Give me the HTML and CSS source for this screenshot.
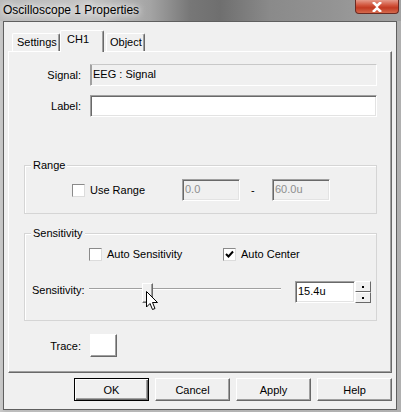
FILE: index.html
```html
<!DOCTYPE html>
<html lang="en">
<head>
  <meta charset="UTF-8">
  <meta name="viewport" content="width=device-width, initial-scale=1.0">
  <title>Oscilloscope 1 Properties</title>
  <link rel="stylesheet" href="styles.css">
</head>
<body>
  <div class="window">
    <div class="titlebar">
      <span class="title">Oscilloscope 1 Properties</span>
      <div class="close-btn">
        <svg width="14" height="10" viewBox="0 0 14 10">
          <path d="M3 0 L7 4 L11 0 M3 10 L7 6 L11 10" stroke="#fff" stroke-width="2.6" fill="none"/>
        </svg>
      </div>
    </div>

    <div class="client">
      <!-- tab strip -->
      <div class="tabs">
        <div class="tab tab-settings">Settings</div>
        <div class="tab tab-active">CH1</div>
        <div class="tab tab-object">Object</div>
      </div>

      <div class="panel">
        <div class="field-row first">
          <span class="row-label">Signal:</span>
          <div class="textbox readonly">EEG : Signal</div>
        </div>
        <div class="field-row">
          <span class="row-label">Label:</span>
          <div class="textbox"></div>
        </div>

        <!-- Range group -->
        <div class="group group-range">
          <span class="caption">Range</span>
          <div class="range-row">
            <label class="check check-range"><span class="box"></span>Use Range</label>
            <div class="textbox small disabled">0.0</div>
            <span class="dash">-</span>
            <div class="textbox small disabled">60.0u</div>
          </div>
        </div>

        <!-- Sensitivity group -->
        <div class="group group-sens">
          <span class="caption">Sensitivity</span>
          <div class="check-row">
            <label class="check check-auto-sens"><span class="box"></span>Auto Sensitivity</label>
            <label class="check"><span class="box checked">
              <svg width="11" height="11" viewBox="0 0 11 11">
                <path d="M2 5 L4.5 7.5 L9 2.5" stroke="#000" stroke-width="2" fill="none"/>
              </svg>
            </span>Auto Center</label>
          </div>
          <div class="slider-row">
            <span class="slider-label">Sensitivity:</span>
            <div class="slider">
              <div class="track"></div>
              <div class="thumb"></div>
              <svg class="cursor" width="13" height="20" viewBox="0 0 13 20">
                <path d="M0.5 0.5 L0.5 16 L4 12.5 L6.5 18.5 L9 17.5 L6.5 11.5 L11.5 11.5 Z" fill="#fff" stroke="#000" stroke-width="1"/>
              </svg>
            </div>
            <div class="textbox num">15.4u</div>
            <div class="spin">
              <div class="spin-btn"><span class="dot"></span></div>
              <div class="spin-btn"><span class="dot"></span></div>
            </div>
          </div>
        </div>

        <div class="field-row trace-row">
          <span class="row-label">Trace:</span>
          <div class="color-btn"></div>
        </div>
      </div>

      <div class="buttons">
        <button class="btn default">OK</button>
        <button class="btn">Cancel</button>
        <button class="btn">Apply</button>
        <button class="btn">Help</button>
      </div>
    </div>
  </div>
</body>
</html>
```

FILE: styles.css
```css
body {
  margin: 0;
  font-family: "Liberation Sans", Arial, sans-serif;
  font-size: 11px;
  color: #000;
  background: #a8a8a8;
}

.window {
  width: 401px;
  height: 412px;
  display: flex;
  flex-direction: column;
  background: linear-gradient(90deg, #c9c9c9 0, #bdbdbd 6px, #b4b4b4 50%, #b0b0b0 100%);
  overflow: hidden;
}

.titlebar {
  height: 21px;
  flex: none;
  display: flex;
  justify-content: space-between;
  background: linear-gradient(90deg, #bababa 0, #c4c4c4 90px, #a4a4a4 150px, #777 190px, #6f6f6f 220px, #8a8a8a 270px, #939393 330px, #a2a2a2 401px);
}

.title {
  font-size: 12px;
  padding: 3px 0 0 3px;
  color: #000;
  text-shadow: 0 0 6px #fff, 0 0 10px #fff;
}

.close-btn {
  width: 42px;
  height: 13px;
  margin-right: 2px;
  border: 1px solid #6b2a22;
  border-top: none;
  border-radius: 0 0 4px 4px;
  background: linear-gradient(#e59a8a 0, #d2553d 40%, #c23a22 60%, #d46a4d 100%);
  display: flex;
  justify-content: center;
  align-items: center;
}

.client {
  flex: none;
  height: 387px;
  margin: 0 4px 0 3px;
  border: 1px solid #5f5f5f;
  background: #f0f0f0;
  display: flex;
  flex-direction: column;
}

/* tabs */
.tabs {
  display: flex;
  align-items: flex-end;
  height: 21px;
  margin-top: 8px;
  padding-left: 8px;
}

.tab {
  height: 17px;
  line-height: 17px;
  border: 1px solid #fff;
  border-right: 1px solid #696969;
  border-bottom: none;
  border-radius: 2px 2px 0 0;
  background: #f0f0f0;
  box-shadow: inset -1px 0 0 #a0a0a0;
}

.tab-settings {
  width: 42px;
  padding-left: 4px;
}

.tab-active {
  position: relative;
  z-index: 1;
  height: 21px;
  line-height: 16px;
  margin-bottom: -1px;
  width: 36px;
  padding-left: 6px;
}

.tab-object {
  width: 34px;
  padding-left: 3px;
  margin-left: 2px;
}

.panel {
  position: relative;
  height: 320px;
  margin: 0 4px 0 4px;
  border-left: 1px solid #fff;
  border-top: 1px solid #fff;
  border-right: 1px solid #696969;
  border-bottom: 1px solid #696969;
  box-shadow: inset -1px -1px 0 #a0a0a0;
}

.field-row {
  display: flex;
  align-items: center;
  margin-top: 9px;
}

.field-row.first {
  margin-top: 12px;
}

.row-label {
  width: 72px;
  text-align: right;
  margin-right: 9px;
}

.textbox {
  box-sizing: border-box;
  width: 287px;
  height: 22px;
  line-height: 18px;
  padding-left: 2px;
  background: #fff;
  border-top: 1px solid #a0a0a0;
  border-left: 1px solid #a0a0a0;
  border-right: 1px solid #fff;
  border-bottom: 1px solid #fff;
  box-shadow: inset 1px 1px 0 #696969, inset -1px -1px 0 #e3e3e3;
}

.textbox.readonly {
  background: #f0f0f0;
  border-top-color: #c8c8c8;
  box-shadow: inset 1px 0 0 #a0a0a0;
}

.textbox.disabled {
  background: #f0f0f0;
  color: #8e8e8e;
}

.textbox.small {
  width: 58px;
}

/* group boxes */
.group {
  width: 351px;
  margin-left: 15px;
  border: 1px solid #d5d5d5;
  box-shadow: inset 1px 1px 0 #fff;
}

.caption {
  display: block;
  width: fit-content;
  margin: -7px 0 0 6px;
  padding: 0 2px;
  line-height: 13px;
  background: #f0f0f0;
}

.group-range {
  margin-top: 48px;
}

.range-row {
  display: flex;
  align-items: center;
  margin: 7px 0 12px;
}

.check {
  display: flex;
  align-items: center;
}

.box {
  box-sizing: border-box;
  width: 13px;
  height: 13px;
  margin-right: 5px;
  background: #fff;
  border-top: 1px solid #8a8a8a;
  border-left: 1px solid #8a8a8a;
  border-right: 1px solid #dcdcdc;
  border-bottom: 1px solid #dcdcdc;
  display: flex;
  justify-content: center;
  align-items: center;
}

.check-range {
  width: 110px;
  margin-left: 47px;
  line-height: 13px;
}

.dash {
  width: 21px;
  padding-left: 11px;
}

.group-sens {
  margin-top: 19px;
}

.check-row {
  display: flex;
  margin-top: 8px;
  line-height: 13px;
}

.check-auto-sens {
  width: 134px;
  margin-left: 64px;
}

.slider-row {
  display: flex;
  align-items: flex-start;
  margin: 20px 0 17px;
}

.slider-label {
  width: 57px;
  margin-left: 7px;
  line-height: 18px;
}

.slider {
  position: relative;
  width: 192px;
  height: 22px;
  margin-right: 14px;
}

.track {
  margin-top: 7px;
  height: 0;
  border-top: 1px solid #a0a0a0;
  border-bottom: 1px solid #fff;
}

.thumb {
  position: absolute;
  left: 53px;
  top: 2px;
  box-sizing: border-box;
  width: 11px;
  height: 20px;
  background: #f0f0f0;
  border-top: 1px solid #fff;
  border-left: 1px solid #fff;
  border-right: 1px solid #696969;
  border-bottom: 1px solid #696969;
  box-shadow: inset -1px -1px 0 #a0a0a0;
}

.cursor {
  position: absolute;
  left: 57px;
  top: 10px;
}

.textbox.num {
  width: 60px;
  height: 22px;
}

.spin {
  width: 16px;
  height: 22px;
  display: flex;
  flex-direction: column;
}

.spin-btn {
  box-sizing: border-box;
  flex: 1;
  background: #f0f0f0;
  border-top: 1px solid #fff;
  border-left: 1px solid #fff;
  border-right: 1px solid #696969;
  border-bottom: 1px solid #696969;
  display: flex;
  justify-content: center;
  align-items: center;
}

.dot {
  width: 2px;
  height: 2px;
  background: #000;
}

.trace-row {
  margin-top: 13px;
}

.color-btn {
  box-sizing: border-box;
  width: 27px;
  height: 23px;
  background: #fff;
  border-top: 1px solid #fff;
  border-left: 1px solid #fff;
  border-right: 1px solid #696969;
  border-bottom: 1px solid #696969;
  box-shadow: inset -1px -1px 0 #a0a0a0;
}

/* dialog buttons */
.buttons {
  display: flex;
  justify-content: flex-end;
  gap: 6px;
  margin: 5px 4px 0 0;
}

.btn {
  box-sizing: border-box;
  width: 75px;
  height: 23px;
  padding: 0;
  font-family: "Liberation Sans", Arial, sans-serif;
  font-size: 11px;
  color: #000;
  background: #f0f0f0;
  border-top: 1px solid #fff;
  border-left: 1px solid #fff;
  border-right: 1px solid #696969;
  border-bottom: 1px solid #696969;
  box-shadow: inset -1px -1px 0 #a0a0a0;
  border-radius: 0;
}

.btn.default {
  border: 1px solid #000;
  box-shadow: inset 1px 1px 0 #fff, inset -1px -1px 0 #696969, inset -2px -2px 0 #a0a0a0;
}
```
